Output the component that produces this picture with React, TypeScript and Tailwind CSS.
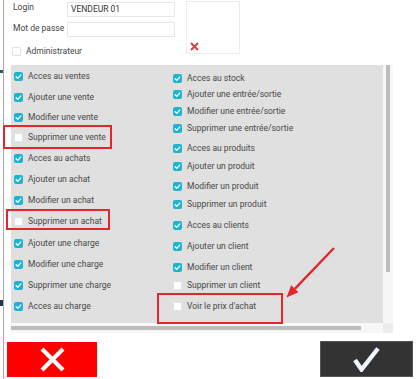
import React from "react";

const MT: Record<number, string> = {
  0: "mt-0",
  1: "mt-[1px]",
  2: "mt-[2px]",
  4: "mt-[4px]",
  5: "mt-[5px]",
  6: "mt-[6px]",
};

type Item = [string, boolean, number];

const leftItems: Item[] = [
  ["Acces au ventes", true, 0],
  ["Ajouter une vente", true, 5],
  ["Modifier une vente", true, 4],
  ["Supprimer une vente", false, 4],
  ["Acces au achats", true, 5],
  ["Ajouter un achat", true, 5],
  ["Modifier un achat", true, 5],
  ["Supprimer un achat", false, 5],
  ["Ajouter une charge", true, 6],
  ["Modifier une charge", true, 5],
  ["Supprimer une charge", true, 5],
  ["Acces au charge", true, 5],
];

const rightItems: Item[] = [
  ["Acces au stock", true, 0],
  ["Ajouter une entrée/sortie", true, 0],
  ["Modifier une entrée/sortie", true, 1],
  ["Supprimer une entrée/sortie", true, 1],
  ["Acces au produits", true, 4],
  ["Ajouter un produit", true, 2],
  ["Modifier un produit", true, 4],
  ["Supprimer un produit", true, 2],
  ["Acces au clients", true, 5],
  ["Ajouter un client", true, 5],
  ["Modifier un client", true, 5],
  ["Supprimer un client", false, 2],
  ["Voir le prix d'achat", false, 5],
];

function Box({ checked }: { checked: boolean }) {
  if (checked) {
    return (
      <span className="flex h-[9px] w-[9px] shrink-0 items-center justify-center rounded-[2px] bg-[#1db4d2]">
        <svg width="9" height="9" viewBox="0 0 9 9">
          <path d="M2.1 4.7 L3.8 6.3 L6.9 2.9" fill="none" stroke="#fff" strokeWidth="1.2" strokeLinecap="round" strokeLinejoin="round" />
        </svg>
      </span>
    );
  }
  return <span className="h-[9px] w-[9px] shrink-0 rounded-[1px] border border-[#e2e2e2] bg-white" />;
}

function Row({ item }: { item: Item }) {
  const [label, checked, mt] = item;
  return (
    <div className={`flex h-[16px] items-center gap-[5px] ${MT[mt]}`}>
      <Box checked={checked} />
      <span className="whitespace-nowrap text-[8.5px] leading-[11px] text-[#484848]">{label}</span>
    </div>
  );
}

export default function App() {
  return (
    <div
      className="relative flex h-[379px] w-[416px] overflow-hidden bg-white"
      style={{ fontFamily: "Roboto, 'Noto Sans', sans-serif" }}
    >
      {/* left gutter fragments */}
      <div className="flex w-[3px] flex-col">
        <div className="mt-[70px] h-[3px] bg-[#2d5566]" />
        <div className="mt-[227px] h-[6px] bg-[#22344e]" />
      </div>
      <div className="w-px bg-[#a9a9a9]" />

      {/* content */}
      <div className="flex flex-1 flex-col">
        {/* top section */}
        <div className="flex h-[65px]">
          <div className="flex w-[171px] flex-col pl-[9px]">
            <div className="mt-[2px] flex h-[15px]">
              <span className="w-[54px] text-[8.5px] leading-[11px] text-[#444]">Login</span>
              <div className="flex h-[15px] w-[108px] items-center border border-[#e6e6e6] pl-[3px] text-[8.5px] text-[#333]">
                VENDEUR 01
              </div>
            </div>
            <div className="mt-[5px] flex h-[15px]">
              <span className="w-[54px] pt-[1px] text-[8.5px] leading-[11px] text-[#444]">Mot de passe</span>
              <div className="h-[15px] w-[108px] border border-[#e6e6e6]" />
            </div>
            <div className="-ml-[1px] mt-[9px] flex items-center gap-[5px]">
              <span className="h-[9px] w-[9px] rounded-[1px] border border-[#e0e0e0] bg-white" />
              <span className="text-[8.5px] leading-[11px] text-[#444]">Administrateur</span>
            </div>
          </div>
          <div className="ml-[11px] mt-[1px] flex h-[53px] w-[54px] items-end border border-[#ececec] pb-[2px] pl-[3px]">
            <svg width="9" height="9" viewBox="0 0 9 9">
              <path d="M1 1 L8 8 M8 1 L1 8" stroke="#e23a33" strokeWidth="1.8" />
            </svg>
          </div>
        </div>

        {/* scroll area */}
        <div className="ml-[7px] grid h-[268px] w-[382px] grid-cols-[372px_10px] grid-rows-[258px_10px]">
          <div className="flex bg-[#e0e0e0]">
            <div className="flex w-[162px] flex-col pl-[3px] pt-[3px]">
              {leftItems.map((it) => (
                <Row key={it[0]} item={it} />
              ))}
            </div>
            <div className="flex flex-col pt-[5px]">
              {rightItems.map((it) => (
                <Row key={it[0]} item={it} />
              ))}
            </div>
          </div>
          <div className="bg-[#f7f7f7] pl-[3px] pr-[3px]">
            <div className="h-[207px] w-[4px] bg-[#bdbdbd]" />
          </div>
          <div className="flex items-center bg-[#f7f7f7]">
            <div className="h-[4px] w-[350px] bg-[#bdbdbd]" />
          </div>
          <div className="bg-[#ececec]" />
        </div>

        {/* buttons */}
        <div className="mt-[9px] flex justify-between pl-[3px] pr-[3px]">
          <div className="flex h-[35px] w-[90px] items-center justify-center bg-[#ff0000]">
            <svg width="25" height="25" viewBox="0 0 25 25">
              <path d="M2 2 L23 23 M23 2 L2 23" stroke="#fff" strokeWidth="4.2" />
            </svg>
          </div>
          <div className="-mt-px flex h-[36px] w-[93px] items-center justify-center border border-[#555] bg-[#333]">
            <svg width="27" height="25" viewBox="0 0 27 25">
              <path d="M2 13 L8.5 22.5 L25 1.5" fill="none" stroke="#eef6ff" strokeWidth="4.4" />
            </svg>
          </div>
        </div>
      </div>

      {/* annotations */}
      <div className="absolute left-[3px] top-[125px] h-[24px] w-[109px] border-2 border-[#e3262b]" />
      <div className="absolute left-[6px] top-[209px] h-[21px] w-[104px] border-2 border-[#e3262b]" />
      <div className="absolute left-[157px] top-[293px] h-[31px] w-[126px] border-2 border-[#e3262b]" />
      <svg className="pointer-events-none absolute left-0 top-0" width="416" height="379">
        <line x1="334" y1="248" x2="294.8" y2="288.8" stroke="#e3262b" strokeWidth="2.4" />
        <polygon points="286.5,297.5 298.4,292.3 291.2,285.3" fill="#e3262b" />
      </svg>
    </div>
  );
}
